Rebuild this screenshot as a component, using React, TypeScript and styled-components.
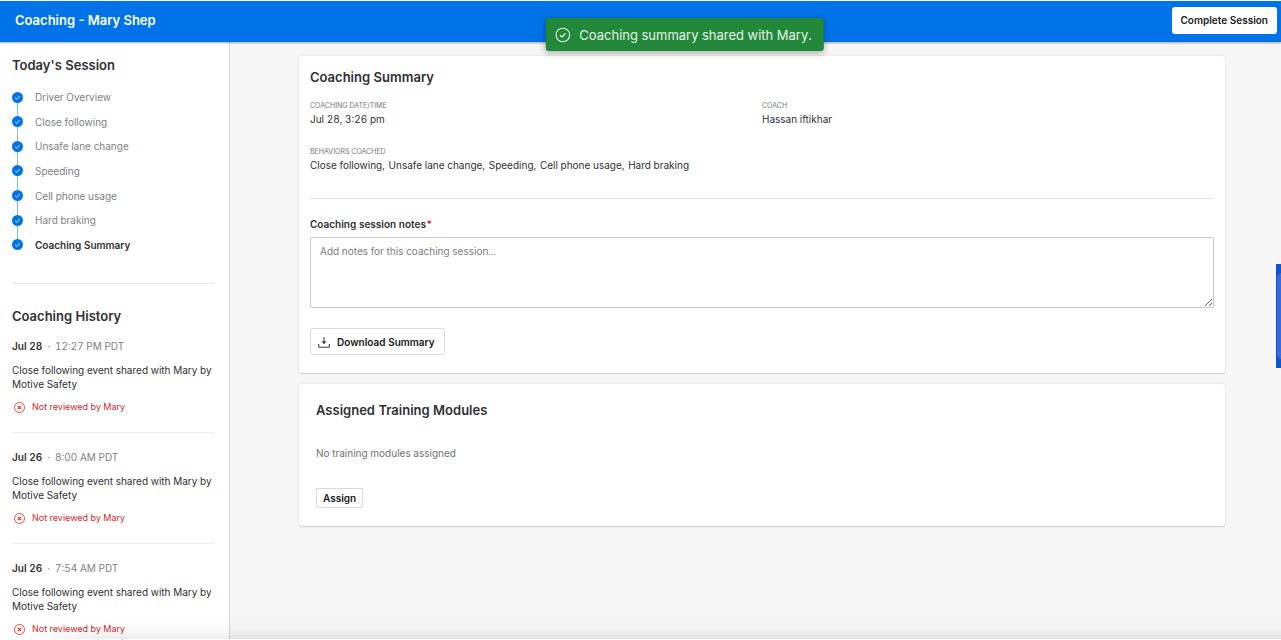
import React from 'react';
import styled, { createGlobalStyle, css } from 'styled-components';

const GlobalStyle = createGlobalStyle`
  * { box-sizing: border-box; }
  body {
    margin: 0;
    background: #fff;
    color: #2f3033;
    font-family: Inter, "Liberation Sans", sans-serif;
    font-size: 10px;
    font-variant-numeric: tabular-nums;
    line-height: 16px;
  }
  h1, h2, p, ul, ol, dl, dd { margin: 0; padding: 0; }
  ul, ol { list-style: none; }
  button, textarea { font: inherit; }
`;

const Page = styled.div`
  position: relative;
  display: flex;
  flex-direction: column;
  height: 100vh;
  overflow: hidden;
  padding: 1px 0;
`;

const TopBar = styled.header`
  position: relative;
  z-index: 1;
  flex: none;
  display: flex;
  align-items: center;
  justify-content: space-between;
  height: 41px;
  padding: 0 4px 3px 15px;
  background: #0073e8;
  box-shadow: 0 1px 2px rgba(0, 0, 0, 0.35);
`;

const PageTitle = styled.h1`
  color: #fff;
  font-size: 13px;
  font-variant-numeric: normal;
  font-weight: 600;
`;

const buttonBase = css`
  display: inline-flex;
  align-items: center;
  justify-content: center;
  background: #fff;
  color: #17181a;
  font-weight: 600;
  line-height: 16px;
  cursor: pointer;
`;

const CompleteButton = styled.button`
  ${buttonBase}
  height: 27px;
  padding: 0 9px;
  border: 0;
  border-radius: 3px;
`;

const OutlineButton = styled.button<{ $compact?: boolean }>`
  ${buttonBase}
  gap: 6px;
  height: ${(p) => (p.$compact ? 20 : 27)}px;
  padding: ${(p) => (p.$compact ? '0 6px' : '0 9px 0 6px')};
  border: 1px solid #d9dadb;
  border-radius: ${(p) => (p.$compact ? 1 : 3)}px;
`;

const Body = styled.div`
  flex: 1;
  min-height: 0;
  display: flex;
`;

const Sidebar = styled.aside`
  flex: none;
  width: 230px;
  padding: 15px 15px 0 12px;
  border-right: 1px solid #d6d7d9;
  background: #fff;
  overflow: hidden;
`;

const SectionTitle = styled.h2`
  font-size: 13px;
  font-weight: 600;
  line-height: 16px;
`;

const Steps = styled.ol`
  position: relative;
  display: flex;
  flex-direction: column;
  justify-content: space-between;
  height: 164px;
  margin-top: 16px;

  &::before {
    content: '';
    position: absolute;
    left: 5px;
    top: 8px;
    bottom: 8px;
    width: 1px;
    background: #7db6f5;
  }
`;

const Step = styled.li<{ $current?: boolean }>`
  position: relative;
  display: flex;
  align-items: center;
  gap: 12px;
  color: ${(p) => (p.$current ? '#2f3033' : '#7d7f82')};
  font-weight: ${(p) => (p.$current ? 600 : 400)};
`;

const StepMark = styled.svg`
  flex: none;
  width: 11px;
  height: 11px;
`;

const Rule = styled.hr<{ $top: number; $bottom: number }>`
  height: 1px;
  margin: ${(p) => p.$top}px 0 ${(p) => p.$bottom}px;
  border: 0;
  background: #e4e5e6;
`;

const HistoryItem = styled.li`
  margin-top: 14px;
  padding-bottom: 17px;
  border-bottom: 1px solid #ebecec;

  & + & { margin-top: 16px; }
`;

const When = styled.p`
  display: flex;
  gap: 5px;
  color: #7d7f82;
  strong { color: #2f3033; font-weight: 600; }
`;

const What = styled.p`
  margin-top: 9px;
  line-height: 14px;
`;

const Status = styled.p`
  display: flex;
  align-items: center;
  gap: 7px;
  margin-top: 8px;
  padding-left: 2px;
  color: #cf1f1f;
  font-size: 9px;

  svg { width: 11px; height: 11px; flex: none; }
`;

const Main = styled.main`
  flex: 1;
  display: flex;
  flex-direction: column;
  gap: 11px;
  padding: 14px 56px 0 69px;
  background: #f6f6f6;
`;

const Card = styled.section<{ $roomy?: boolean }>`
  padding: ${(p) => (p.$roomy ? '18px 17px' : '13px 11px 18px')};
  border-radius: 3px;
  background: #fff;
  box-shadow: 0 0 2px rgba(0, 0, 0, 0.16), 0 1px 1px rgba(0, 0, 0, 0.12);
`;

const Facts = styled.dl`
  display: grid;
  grid-template-columns: 1fr 1fr;
  row-gap: 20px;
  margin-top: 16px;
`;

const Fact = styled.div`
  dt {
    color: #75777a;
    font-size: 7px;
    line-height: 10px;
    text-transform: uppercase;
  }
`;

const Behavior = styled.span`
  margin-right: 1px;
`;

const FieldLabel = styled.label`
  display: block;
  font-weight: 600;
  span { color: #d32020; }
`;

const Notes = styled.textarea`
  display: block;
  width: 100%;
  height: 71px;
  margin: 5px 0 20px;
  padding: 5px 9px;
  border: 1px solid #c9cbcd;
  border-radius: 2px;
  background: #fff;
  color: inherit;
  outline: none;
  &::placeholder { color: #7a7c7f; opacity: 1; }
`;

const Empty = styled.p`
  margin: 27px 0;
  color: #707275;
`;

const Toast = styled.div`
  position: absolute;
  z-index: 2;
  top: 18px;
  left: calc(50% + 44px);
  transform: translateX(-50%);
  display: flex;
  align-items: center;
  gap: 9px;
  height: 33px;
  padding: 0 12px 0 9px;
  border-radius: 3px;
  background: #22883a;
  box-shadow: 0 2px 6px rgba(0, 0, 0, 0.3);
  color: #e6f3e9;
  font-size: 13px;
  white-space: nowrap;

  svg { width: 16px; height: 16px; }
`;

const SideTab = styled.button`
  position: absolute;
  right: 0;
  top: 264px;
  width: 5px;
  height: 104px;
  padding: 0;
  border: 0;
  background: #0b55cf;
  overflow: hidden;

  &::before {
    content: '';
    position: absolute;
    inset: 9px -5px 9px 1px;
    border-radius: 5px;
    background: #3a69dc;
  }
`;

const BottomFade = styled.div`
  position: absolute;
  left: 0;
  right: 0;
  bottom: 1px;
  height: 22px;
  background: linear-gradient(to bottom, rgba(0, 0, 0, 0), rgba(0, 0, 0, 0.02) 60%, rgba(0, 0, 0, 0.08));
  mask-image: linear-gradient(to right, transparent 20px, #000 110px);
  pointer-events: none;
`;

const steps = [
  'Driver Overview',
  'Close following',
  'Unsafe lane change',
  'Speeding',
  'Cell phone usage',
  'Hard braking',
  'Coaching Summary',
];

const behaviors = steps.slice(1, -1);

const history = [
  { date: 'Jul 28', time: '12:27 PM PDT' },
  { date: 'Jul 26', time: '8:00 AM PDT' },
  { date: 'Jul 26', time: '7:54 AM PDT' },
];

export default function App() {
  return (
    <Page>
      <GlobalStyle />
      <TopBar>
        <PageTitle>Coaching - Mary Shep</PageTitle>
        <CompleteButton type="button">Complete Session</CompleteButton>
      </TopBar>
      <Body>
        <Sidebar>
          <SectionTitle>Today's Session</SectionTitle>
          <Steps>
            {steps.map((label, i) => (
              <Step key={label} $current={i === steps.length - 1}>
                <StepMark viewBox="0 0 11 11" aria-hidden="true">
                  <circle cx="5.5" cy="5.5" r="5.5" fill="#0073e8" />
                  <path d="M3.2 5.9 4.8 7.3 7.8 4" fill="none" stroke="#cfe4fb" strokeWidth="1" />
                </StepMark>
                {label}
              </Step>
            ))}
          </Steps>
          <Rule $top={30} $bottom={24} />
          <SectionTitle>Coaching History</SectionTitle>
          <ul>
            {history.map((h) => (
              <HistoryItem key={h.time}>
                <When>
                  <strong>{h.date}</strong>
                  <span>·</span>
                  <span>{h.time}</span>
                </When>
                <What>Close following event shared with Mary by Motive Safety</What>
                <Status>
                  <svg viewBox="0 0 11 11" fill="none" stroke="#e5352f" aria-hidden="true">
                    <circle cx="5.5" cy="5.5" r="5" strokeWidth="0.9" />
                    <path d="M3.8 3.8 7.2 7.2M7.2 3.8 3.8 7.2" strokeWidth="1.2" />
                  </svg>
                  Not reviewed by Mary
                </Status>
              </HistoryItem>
            ))}
          </ul>
        </Sidebar>
        <Main>
          <Card>
            <SectionTitle>Coaching Summary</SectionTitle>
            <Facts>
              <Fact>
                <dt>Coaching date/time</dt>
                <dd>Jul 28, 3:26 pm</dd>
              </Fact>
              <Fact>
                <dt>Coach</dt>
                <dd>Hassan iftikhar</dd>
              </Fact>
              <Fact>
                <dt>Behaviors coached</dt>
                <dd>
                  {behaviors.map((name, i) => (
                    <Behavior key={name}>
                      {i < behaviors.length - 1 ? `${name}, ` : name}
                    </Behavior>
                  ))}
                </dd>
              </Fact>
            </Facts>
            <Rule $top={25} $bottom={17} />
            <FieldLabel htmlFor="notes">
              Coaching session notes<span>*</span>
            </FieldLabel>
            <Notes id="notes" placeholder="Add notes for this coaching session..." />
            <OutlineButton type="button">
              <svg width="14" height="14" viewBox="0 0 14 14" fill="none" stroke="#3a3b3d" aria-hidden="true">
                <path d="M1.7 9v2.4q0 .8.8.8h9q.8 0 .8-.8V9" strokeWidth="1.1" />
                <path d="M7 2v6.4" strokeWidth="1" />
                <path d="M4.9 6.6h4.2L7 9z" fill="#2f3033" strokeWidth="0.3" />
              </svg>
              Download Summary
            </OutlineButton>
          </Card>
          <Card $roomy>
            <SectionTitle>Assigned Training Modules</SectionTitle>
            <Empty>No training modules assigned</Empty>
            <OutlineButton type="button" $compact>
              Assign
            </OutlineButton>
          </Card>
        </Main>
      </Body>
      <Toast role="status">
        <svg viewBox="0 0 16 16" fill="none" stroke="#e6f3e9" aria-hidden="true">
          <circle cx="8" cy="8" r="6.8" strokeWidth="1.1" />
          <path d="M5.3 8.3 7.2 10 10.7 6.4" strokeWidth="1.3" />
        </svg>
        Coaching summary shared with Mary.
      </Toast>
      <SideTab type="button" aria-label="Open panel" />
      <BottomFade />
    </Page>
  );
}
